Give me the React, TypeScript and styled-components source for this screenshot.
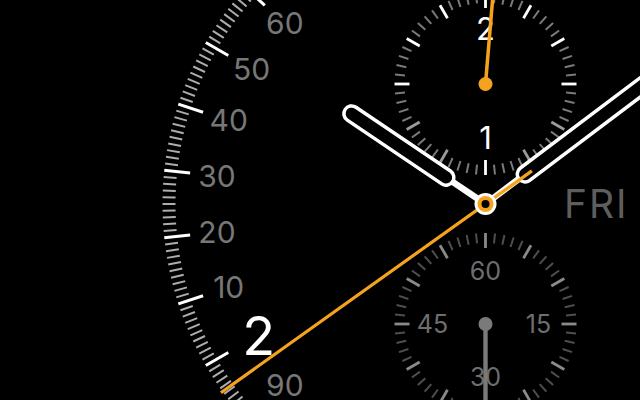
import React from "react";
import styled, { createGlobalStyle } from "styled-components";

const Global = createGlobalStyle`
  html, body { margin: 0; padding: 0; background: #000; }
  #root { width: 640px; height: 400px; }
`;

const Screen = styled.div`
  width: 640px;
  height: 400px;
  background: #000;
  overflow: hidden;
`;

const Face = styled.svg`
  display: block;
  width: 640px;
  height: 400px;
`;

const FONT = `"Inter", "Liberation Sans", Arial, sans-serif`;

const ScaleNumber = styled.text<{ $size: number; $color: string }>`
  font-family: ${FONT};
  font-size: ${(p) => p.$size}px;
  font-weight: 400;
  fill: ${(p) => p.$color};
`;

const DayLabel = styled.text`
  font-family: ${FONT};
  font-size: 39px;
  font-weight: 400;
  fill: #5e5e5e;
  letter-spacing: 2px;
`;

const ORANGE = "#f5a31e";
const CX = 485.5;
const CY = 204;

const polar = (cx: number, cy: number, r: number, deg: number): [number, number] => {
  const a = (deg * Math.PI) / 180;
  return [cx + r * Math.sin(a), cy - r * Math.cos(a)];
};

type TickProps = {
  cx: number;
  cy: number;
  deg: number;
  rOut: number;
  len: number;
  width: number;
  color: string;
};

const Tick: React.FC<TickProps> = ({ cx, cy, deg, rOut, len, width, color }) => {
  const [x1, y1] = polar(cx, cy, rOut, deg);
  const [x2, y2] = polar(cx, cy, rOut - len, deg);
  return <line x1={x1} y1={y1} x2={x2} y2={y2} stroke={color} strokeWidth={width} />;
};

const Label: React.FC<{
  cx: number;
  cy: number;
  r: number;
  deg: number;
  size: number;
  color: string;
  text: string;
}> = ({ cx, cy, r, deg, size, color, text }) => {
  const [x, y] = polar(cx, cy, r, deg);
  return (
    <ScaleNumber
      $size={size}
      $color={color}
      x={x}
      y={y + size * 0.364}
      textAnchor="middle"
    >
      {text}
    </ScaleNumber>
  );
};

const MainDial: React.FC = () => {
  const ticks = [];
  for (let i = 0; i < 300; i++) {
    const deg = i * 1.2;
    const major = i % 10 === 0;
    ticks.push(
      <Tick
        key={i}
        cx={CX}
        cy={CY}
        deg={deg}
        rOut={323}
        len={major ? 26 : 13}
        width={major ? 3 : 2}
        color={major ? "#ffffff" : "#adadad"}
      />
    );
  }
  const labels: { deg: number; t: string }[] = [];
  for (let s = 0; s < 3; s++) {
    for (let k = 1; k <= 9; k++) {
      labels.push({ deg: s * 120 + k * 12, t: String(k * 10) });
    }
  }
  const numerals = [
    { deg: 120, t: "1" },
    { deg: 240, t: "2" },
    { deg: 0, t: "3" },
  ];
  return (
    <g>
      {ticks}
      {labels.map((l, i) => (
        <Label key={i} cx={CX} cy={CY} r={270} deg={l.deg} size={30} color="#777777" text={l.t} />
      ))}
      {numerals.map((n) => (
        <Label key={n.t} cx={CX} cy={CY} r={262} deg={n.deg} size={54} color="#ffffff" text={n.t} />
      ))}
    </g>
  );
};

const TopSubdial: React.FC<{ cy: number }> = ({ cy }) => {
  const ticks = [];
  const majorColors = ["#fff", "#fff", "#fff", "#fff", "#9a9a9a", "#9a9a9a", "#fff", "#9a9a9a", "#9a9a9a", "#fff", "#fff", "#fff"];
  for (let i = 0; i < 60; i++) {
    const major = i % 5 === 0;
    ticks.push(
      <Tick
        key={i}
        cx={CX}
        cy={cy}
        deg={i * 6}
        rOut={91}
        len={major ? 15 : 10}
        width={major ? 2.8 : 2}
        color={major ? majorColors[i / 5] : "#7a7a7a"}
      />
    );
  }
  return (
    <g>
      {ticks}
      <Label cx={CX} cy={cy} r={55} deg={0} size={31} color="#ffffff" text="2" />
      <Label cx={CX} cy={cy} r={54} deg={180} size={31} color="#ffffff" text="1" />
      <g transform={`translate(${CX} ${cy}) rotate(4.8)`}>
        <rect x={-1.75} y={-92} width={3.5} height={92} fill={ORANGE} />
        <circle r={7} fill={ORANGE} />
      </g>
    </g>
  );
};

const BottomSubdial: React.FC<{ cy: number }> = ({ cy }) => {
  const ticks = [];
  for (let i = 0; i < 60; i++) {
    const major = i % 5 === 0;
    ticks.push(
      <Tick
        key={i}
        cx={CX}
        cy={cy}
        deg={i * 6}
        rOut={91}
        len={major ? 15 : 10}
        width={major ? 2.8 : 2}
        color={major ? "#8a8a8a" : "#4e4e4e"}
      />
    );
  }
  const labels = [
    { deg: 0, t: "60" },
    { deg: 90, t: "15" },
    { deg: 180, t: "30" },
    { deg: 270, t: "45" },
  ];
  return (
    <g>
      {ticks}
      {labels.map((l) => (
        <Label key={l.t} cx={CX} cy={cy} r={53} deg={l.deg} size={25} color="#6e6e6e" text={l.t} />
      ))}
      <g transform={`translate(${CX} ${cy}) rotate(180)`}>
        <rect x={-2.2} y={-90} width={4.4} height={90} fill="#7a7a7a" />
        <circle r={7} fill="#7a7a7a" />
      </g>
    </g>
  );
};

const OutlineHand: React.FC<{ deg: number; near: number; far: number }> = ({ deg, near, far }) => {
  const sw = 3.5;
  const w = 19 - sw;
  return (
    <g transform={`translate(${CX} ${CY}) rotate(${deg})`}>
      <rect x={-3.2} y={-(near + 3)} width={6.4} height={near + 3} fill="#fff" />
      <rect
        x={-w / 2}
        y={-(far - sw / 2)}
        width={w}
        height={far - near - sw}
        rx={w / 2}
        fill="#000"
        stroke="#fff"
        strokeWidth={sw}
      />
    </g>
  );
};

const SecondsHand: React.FC<{ deg: number }> = ({ deg }) => (
  <g transform={`translate(${CX} ${CY}) rotate(${deg})`}>
    <rect x={-1.6} y={-325} width={3.2} height={382} fill={ORANGE} />
  </g>
);

const Pivot: React.FC = () => (
  <g transform={`translate(${CX} ${CY})`}>
    <circle r={11} fill="#fff" />
    <circle r={8} fill={ORANGE} />
    <circle r={4} fill="#000" />
  </g>
);

export default function App() {
  return (
    <Screen>
      <Global />
      <Face viewBox="0 0 640 400">
        <MainDial />
        <TopSubdial cy={84} />
        <BottomSubdial cy={324} />
        <DayLabel x={564} y={218}>FRI</DayLabel>
        <OutlineHand deg={-56} near={38} far={171} />
        <OutlineHand deg={53} near={40} far={320} />
        <SecondsHand deg={234.5} />
        <Pivot />
      </Face>
    </Screen>
  );
}
